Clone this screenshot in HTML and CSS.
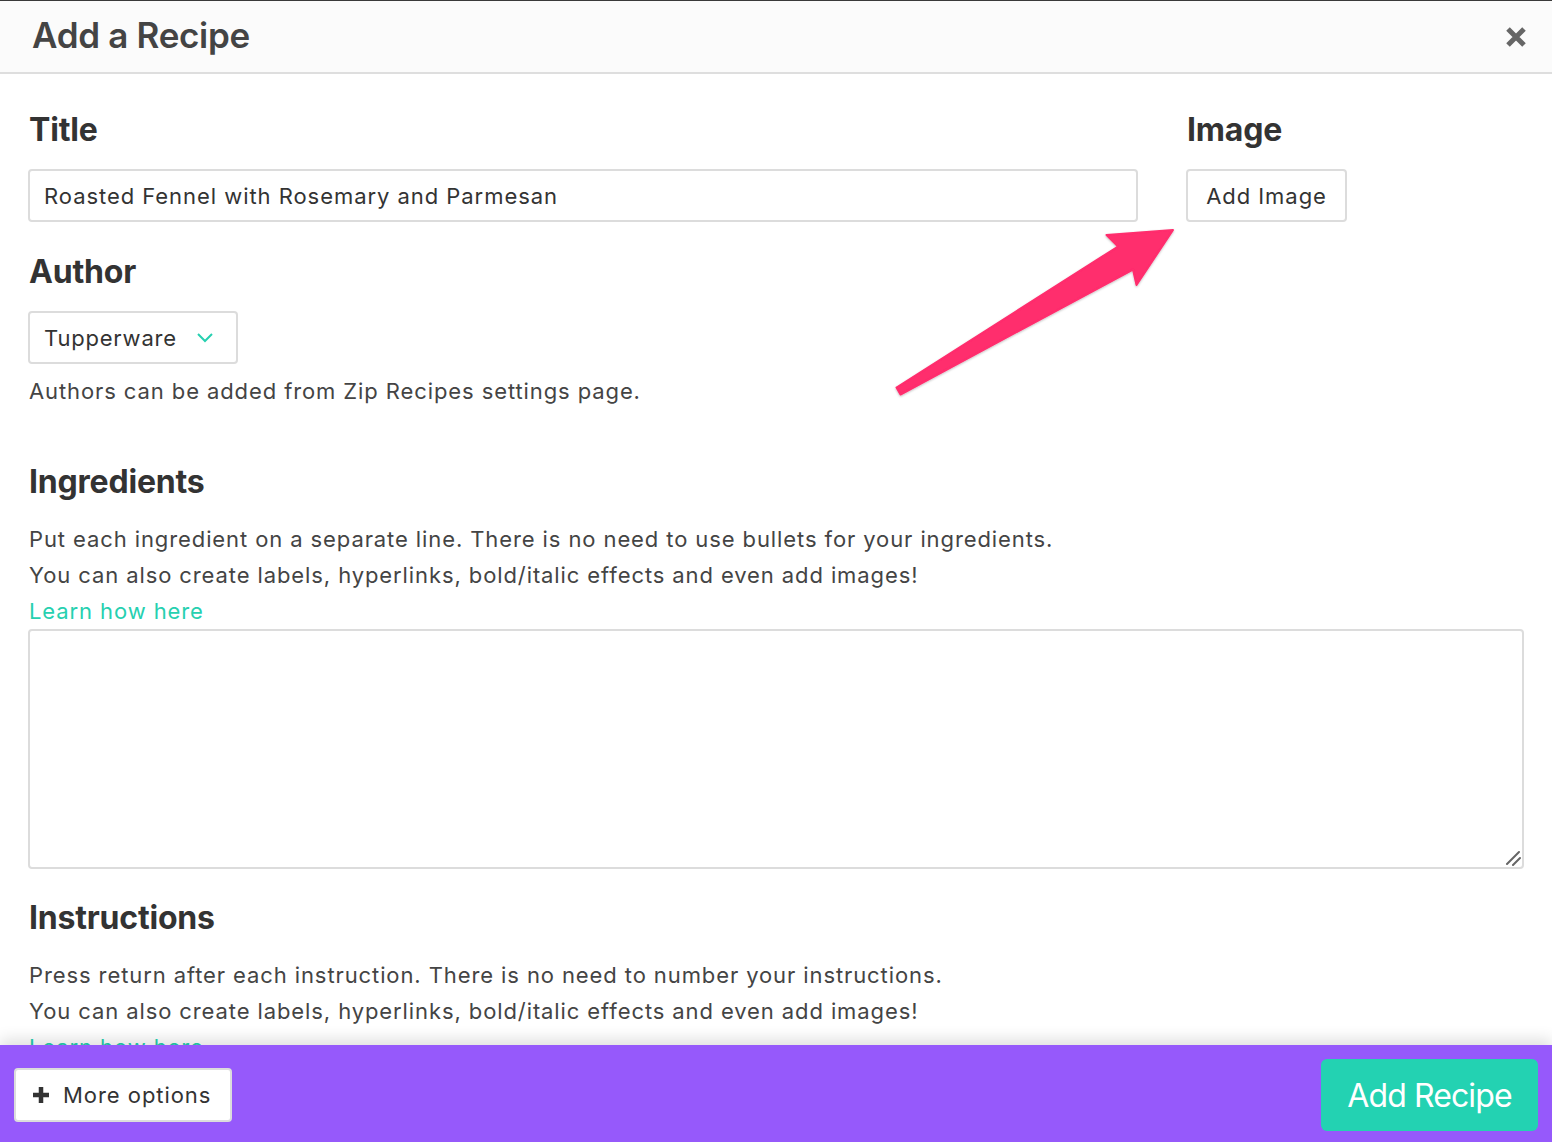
FILE: index.html
```html
<!DOCTYPE html>
<html lang="en">
<head>
<meta charset="utf-8">
<title>Add a Recipe</title>
<link rel="stylesheet" href="styles.css">
</head>
<body>
<div class="modal">
  <header class="modal-header">
    <h1 class="modal-title">Add a Recipe</h1>
    <button class="close-btn" aria-label="Close">
      <svg width="22" height="22" viewBox="0 0 22 22"><path d="M3 3 L19 19 M19 3 L3 19" stroke="#666" stroke-width="5" stroke-linecap="butt"/></svg>
    </button>
  </header>
  <main class="modal-body">
    <div class="top-grid">
      <div class="col-main">
        <section class="field">
          <h2 class="label">Title</h2>
          <input class="text-input" type="text" value="Roasted Fennel with Rosemary and Parmesan">
        </section>
        <section class="field field-author">
          <h2 class="label">Author</h2>
          <div class="select">
            <span>Tupperware</span>
            <svg class="chev" width="18" height="12" viewBox="0 0 18 12"><path d="M2 2 L9 9 L16 2" fill="none" stroke="#26d0b0" stroke-width="2"/></svg>
          </div>
          <p class="help">Authors can be added from Zip Recipes settings page.</p>
        </section>
      </div>
      <div class="col-side">
        <h2 class="label">Image</h2>
        <button class="btn-outline">Add Image</button>
      </div>
    </div>

    <section class="block">
      <h2 class="label">Ingredients</h2>
      <p class="para">Put each ingredient on a separate line. There is no need to use bullets for your ingredients.<br>You can also create labels, hyperlinks, bold/italic effects and even add images!<br><a class="link" href="#">Learn how here</a></p>
      <div class="textarea-wrap">
        <textarea class="textarea"></textarea>
        <svg class="grip" width="16" height="16" viewBox="0 0 16 16"><path d="M2 14 L14 2 M8 15 L15 8" stroke="#666" stroke-width="2" stroke-linecap="round"/></svg>
      </div>
    </section>

    <section class="block">
      <h2 class="label">Instructions</h2>
      <p class="para">Press return after each instruction. There is no need to number your instructions.<br>You can also create labels, hyperlinks, bold/italic effects and even add images!<br><a class="link" href="#">Learn how here</a></p>
    </section>

    <svg class="arrow" width="300" height="180" viewBox="880 220 300 180">
      <defs>
        <filter id="sh" x="-10%" y="-10%" width="120%" height="130%">
          <feDropShadow dx="0" dy="1" stdDeviation="1" flood-color="#000" flood-opacity="0.25"/>
        </filter>
      </defs>
      <polygon filter="url(#sh)" points="896.5,387.5 1118,246.5 1106.5,235 1173,230 1136.5,285 1133,269.5 900.5,394.5" fill="#ff2d6d" stroke="#ff2d6d" stroke-width="2" stroke-linejoin="round"/>
    </svg>
  </main>
  <footer class="modal-footer">
    <button class="btn-more">
      <svg width="18" height="18" viewBox="0 0 18 18"><path d="M9 1 V17 M1 9 H17" stroke="#333" stroke-width="4.5"/></svg>
      <span>More options</span>
    </button>
    <button class="btn-primary">Add Recipe</button>
  </footer>
</div>
</body>
</html>
```

FILE: styles.css
```css
* { box-sizing: border-box; }
html, body { margin: 0; padding: 0; }
body {
  width: 1552px;
  height: 1142px;
  overflow: hidden;
  font-family: Inter, "Noto Sans", "Liberation Sans", sans-serif;
  color: #444;
  background: #fff;
}
.modal {
  display: flex;
  flex-direction: column;
  height: 1142px;
  border-top: 1px solid #3a3a3a;
}
.modal-header {
  height: 73px;
  flex: none;
  display: flex;
  align-items: center;
  justify-content: space-between;
  padding: 0 24px 3px 32px;
  background: #fbfbfb;
  border-bottom: 2px solid #dedede;
}
.modal-title {
  margin: 0;
  font-size: 35px;
  font-weight: 600;
  color: #444;
  letter-spacing: -0.3px;
}
.close-btn {
  border: 0;
  background: none;
  padding: 0;
  width: 24px;
  height: 24px;
  display: flex;
  align-items: center;
  justify-content: center;
  margin-top: 3px;
}
.modal-body {
  flex: 1;
  min-height: 0;
  overflow: hidden;
  position: relative;
  padding: 37px 28px 0 28px;
}
.top-grid {
  display: grid;
  grid-template-columns: 1110px 1fr;
  column-gap: 48px;
}
.label {
  margin: 0 0 20px 1px;
  font-size: 32px;
  line-height: 38px;
  font-weight: 700;
  color: #333;
  letter-spacing: -0.2px;
}
.field-author { margin-top: 31px; }
.text-input {
  display: block;
  width: 100%;
  height: 53px;
  border: 2px solid #dcdcdc;
  border-radius: 4px;
  padding: 0 14px;
  font-family: inherit;
  font-size: 22px;
  color: #333;
  background: #fff;
  letter-spacing: 0.95px;
  outline: none;
}
.select {
  width: 210px;
  height: 53px;
  border: 2px solid #dcdcdc;
  border-radius: 4px;
  display: flex;
  align-items: center;
  justify-content: space-between;
  padding: 0 22px 0 14px;
  font-size: 22px;
  color: #333;
  letter-spacing: 0.8px;
}
.chev { margin-top: 1px; }
.help {
  margin: 9px 0 0 1px;
  font-size: 22px;
  line-height: 36px;
  color: #444;
  letter-spacing: 0.9px;
}
.col-side .label { margin-left: 1px; }
.btn-outline {
  width: 161px;
  height: 53px;
  border: 2px solid #dcdcdc;
  border-radius: 4px;
  background: #fff;
  font-family: inherit;
  font-size: 22px;
  color: #333;
  letter-spacing: 0.95px;
  padding: 0;
}
.block { margin-top: 54px; }
.block + .block { margin-top: 30px; }
.para {
  margin: 0 0 0 1px;
  font-size: 22px;
  line-height: 36px;
  color: #444;
  letter-spacing: 0.9px;
}
.link { color: #26d0b0; text-decoration: none; }
.textarea-wrap {
  position: relative;
  width: 1496px;
}
.textarea {
  display: block;
  width: 1496px;
  height: 240px;
  border: 2px solid #dcdcdc;
  border-radius: 4px;
  font-family: inherit;
  font-size: 22px;
  resize: none;
  outline: none;
}
.grip {
  position: absolute;
  right: 3px;
  bottom: 3px;
}
.arrow {
  position: absolute;
  left: 880px;
  top: 146px;
  pointer-events: none;
}
.modal-footer {
  position: relative;
  z-index: 2;
  height: 97px;
  flex: none;
  background: #9659fb;
  box-shadow: 0 -6px 14px rgba(0,0,0,0.12);
  display: flex;
  align-items: center;
  justify-content: space-between;
  padding: 3px 14px 0 14px;
}
.btn-more {
  height: 54px;
  width: 218px;
  display: flex;
  align-items: center;
  gap: 13px;
  padding: 0 0 0 16px;
  background: #fff;
  border: 2px solid #dcdcdc;
  border-radius: 4px;
  font-family: inherit;
  font-size: 22px;
  color: #333;
  letter-spacing: 0.95px;
}
.btn-primary {
  width: 217px;
  height: 72px;
  border: 0;
  border-radius: 6px;
  background: #23d2b2;
  color: #fff;
  font-family: inherit;
  font-size: 32px;
  font-weight: 400;
  padding: 0;
  letter-spacing: -0.9px;
}
```
